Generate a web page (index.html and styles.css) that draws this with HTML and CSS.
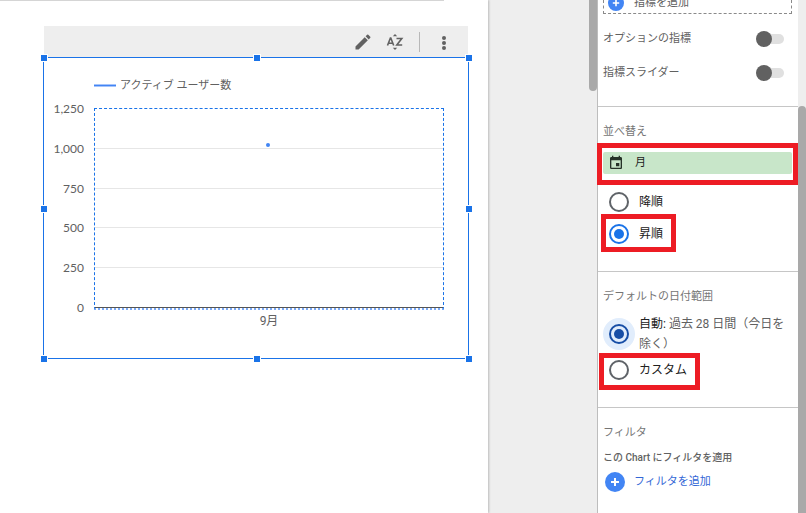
FILE: index.html
```html
<!DOCTYPE html>
<html lang="ja">
<head>
<meta charset="utf-8">
<title>レポート エディタ</title>
<link rel="stylesheet" href="styles.css">
</head>
<body>
<div class="app">
  <main class="canvas">
    <div class="page">
      <div class="rule"></div>
      <div class="toolbar">
        <button class="tool" aria-label="編集"><svg width="20" height="20" viewBox="0 0 24 24"><path d="M3 17.25V21h3.75L17.81 9.94l-3.75-3.75L3 17.25zM20.71 7.04a1 1 0 0 0 0-1.41l-2.34-2.34a1 1 0 0 0-1.41 0l-1.83 1.83 3.75 3.75 1.83-1.83z"/></svg></button>
        <button class="tool" aria-label="並べ替え"><svg width="20" height="20" viewBox="0 0 20 20"><path d="M10 2l2.200 2.200h-4.400zM10 18l-2.200-2.200h4.400z"/><path class="stroke" d="M2.500 13.500L5.400 6h.4l2.900 7.500M3.500 11.300h4.300M11.500 6.500h5.300l-5 6.500h5.400"/></svg></button>
        <span class="separator"></span>
        <button class="tool" aria-label="その他"><svg width="20" height="20" viewBox="0 0 20 20"><circle cx="10" cy="6" r="2"/><circle cx="10" cy="11" r="2"/><circle cx="10" cy="16" r="2"/></svg></button>
      </div>
      <section class="chart">
        <div class="legend"><span class="swatch"></span><span class="series">アクティブ ユーザー数</span></div>
        <div class="graph">
          <div class="scale"><span>1,250</span><span>1,000</span><span>750</span><span>500</span><span>250</span><span>0</span></div>
          <div class="plot">
            <div class="band"></div><div class="band"></div><div class="band"></div><div class="band"></div><div class="band"></div>
            <span class="point"></span>
          </div>
        </div>
        <div class="months">9月</div>
        <div class="handles">
          <i class="handle top start"></i><i class="handle top middle"></i><i class="handle top end"></i>
          <i class="handle center start"></i><i class="handle center end"></i>
          <i class="handle bottom start"></i><i class="handle bottom middle"></i><i class="handle bottom end"></i>
        </div>
      </section>
    </div>
  </main>
  <div class="scroll scroll-canvas"><div class="thumb"></div></div>
  <aside class="panel">
    <section class="section metrics">
      <div class="dropzone">
        <button class="add"><svg width="16" height="16" viewBox="0 0 20 20"><circle cx="10" cy="10" r="10"/><path d="M10 6v8M6 10h8"/></svg>指標を追加</button>
      </div>
      <label class="option">オプションの指標<input class="switch" type="checkbox"></label>
      <label class="option">指標スライダー<input class="switch" type="checkbox"></label>
    </section>
    <section class="section sort">
      <h2>並べ替え</h2>
      <div class="marked marked-field">
        <button class="field"><svg width="16" height="16" viewBox="0 0 24 24"><path d="M17 12h-5v5h5v-5zM16 1v2H8V1H6v2H5c-1.100 0-2 .9-2 2v14a2 2 0 0 0 2 2h14c1.100 0 2-.9 2-2V5c0-1.100-.9-2-2-2h-1V1h-2zm3 18H5V8h14v11z"/></svg>月</button>
      </div>
      <label class="choice"><input type="radio" name="order">降順</label>
      <label class="choice marked marked-order"><input type="radio" name="order" checked>昇順</label>
    </section>
    <section class="section dates">
      <h2>デフォルトの日付範囲</h2>
      <label class="choice auto"><input class="focused" type="radio" name="range" checked><span>自動: <span class="hint">過去 28 日間（今日を除く）</span></span></label>
      <label class="choice marked marked-custom"><input type="radio" name="range">カスタム</label>
    </section>
    <section class="section filters">
      <h2>フィルタ</h2>
      <h3>この Chart にフィルタを適用</h3>
      <button class="add add-filter"><svg width="20" height="20" viewBox="0 0 20 20"><circle cx="10" cy="10" r="10"/><path d="M10 6v8M6 10h8"/></svg>フィルタを追加</button>
    </section>
  </aside>
  <div class="scroll scroll-panel"><div class="thumb"></div></div>
</div>
</body>
</html>
```
FILE: styles.css
```css
* {
  box-sizing: border-box;
}

body {
  margin: 0;
  background: #eee;
  color: #616161;
  font: 11px/16px Roboto, "Noto Sans CJK JP", sans-serif;
}

button {
  display: flex;
  align-items: center;
  margin: 0;
  padding: 0;
  border: 0;
  background: none;
  color: inherit;
  font: inherit;
}

svg {
  flex: none;
}

.app {
  display: flex;
  height: 100vh;
  overflow: hidden;
}

/* Report canvas */
.canvas {
  display: flex;
  flex: 1;
  padding-right: 101px;
}

.page {
  flex: 1;
  padding: 0 19px 0 43px;
  background: #fff;
  box-shadow: 1px 0 2px #bbb;
}

.rule {
  height: 1px;
  margin: 0 25px 0 -43px;
  background: #d5d5d5;
}

.toolbar {
  display: flex;
  align-items: center;
  justify-content: flex-end;
  height: 31px;
  margin: 25px 1px 0;
  padding-right: 14px;
  background: #eee;
}

.tool {
  margin-right: 12px;
}

.tool:last-child {
  margin: 0;
}

.tool svg {
  fill: #616161;
}

.tool .stroke {
  fill: none;
  stroke: #616161;
  stroke-width: 1.6;
}

.separator {
  width: 1px;
  height: 20px;
  margin: 0 14px 0 2px;
  background: #b8b8b8;
}

.chart {
  position: relative;
  padding: 17px 24px 29px 0;
  border: 1px solid #1a73e8;
}

.legend {
  display: flex;
  align-items: center;
  gap: 4px;
  height: 20px;
  margin: 0 0 13px 50px;
}

.series {
  padding-top: 2px;
}

.swatch {
  width: 22px;
  height: 3px;
  border: solid #a5c4fb;
  border-width: 1px 0;
  background: #4285f4;
}

.graph {
  display: flex;
}

.scale {
  display: flex;
  flex-direction: column;
  justify-content: space-between;
  width: 50px;
  margin: -7px 0 -6px;
  padding-right: 10px;
  font-family: Lato, sans-serif;
  font-size: 12px;
  text-align: right;
}

.plot {
  position: relative;
  display: flex;
  flex: 1;
  flex-direction: column;
  height: 202px;
  border: 1px dashed #1a73e8;
  border-bottom: 2px dotted #7baaf7;
}

.band {
  flex: 1;
  border-bottom: 1px solid #e6e6e6;
}

.band:nth-child(5) {
  border-color: #555;
}

.point {
  position: absolute;
  top: 17%;
  left: 49%;
  width: 4px;
  height: 4px;
  border-radius: 50%;
  background: #4285f4;
}

.months {
  margin: 3px 0 0 50px;
  font-size: 12px;
  text-align: center;
}

.handles {
  position: absolute;
  inset: 0 -1px -1px 0;
}

.handle {
  position: absolute;
  width: 6px;
  height: 6px;
  margin: -3px;
  background: #1a73e8;
  box-shadow: 0 0 0 1px #fff;
}

.top { top: 0; }
.center { top: 50%; }
.bottom { top: 100%; }
.start { left: 0; }
.middle { left: 50%; }
.end { left: 100%; }

/* Scroll bars */
.scroll {
  flex: 0 0 8px;
}

.thumb {
  background: #a9a9a9;
}

.scroll-canvas .thumb {
  height: 91px;
  border-radius: 0 0 4px 4px;
}

.scroll-panel {
  padding-top: 106px;
}

.scroll-panel .thumb {
  height: 100%;
  border-radius: 4px 4px 0 0;
}

/* Properties panel */
.panel {
  flex: 0 0 201px;
  border-left: 1px solid #bdbdbd;
  background: #fff;
}

.section {
  padding: 17px 6px 0 5px;
  border-bottom: 1px solid #c6c6c6;
}

.section:last-child {
  border: 0;
}

.metrics {
  padding-top: 0;
  padding-bottom: 25px;
}

.dropzone {
  display: flex;
  align-items: flex-end;
  height: 14px;
  margin-bottom: 17px;
  padding: 0 4px 2px;
  border: 1px dashed #8a8a8a;
  border-top: 0;
}

.add {
  gap: 10px;
}

.add circle {
  fill: #4285f4;
}

.add path {
  stroke: #fff;
  stroke-width: 2;
}

.option {
  display: flex;
  align-items: center;
  justify-content: space-between;
  height: 16px;
  margin: 0 8px 18px 0;
}

.option:last-child {
  margin-bottom: 0;
}

.switch {
  position: relative;
  width: 20px;
  height: 10px;
  margin: 0;
  border-radius: 0 5px 5px 0;
  background: #e0e0e0;
  appearance: none;
}

.switch::before {
  position: absolute;
  top: -3px;
  left: -8px;
  width: 16px;
  height: 16px;
  border-radius: 50%;
  background: #616161;
  content: "";
}

h2 {
  margin: 0;
  color: #757575;
  font-size: 11px;
  font-weight: 400;
}

h3 {
  margin: 0;
  font-size: 10px;
  font-weight: 500;
}

.sort {
  padding-bottom: 26px;
}

.marked {
  position: relative;
}

.marked::after {
  position: absolute;
  border: 5px solid #ed1c24;
  content: "";
  pointer-events: none;
}

.marked-field {
  margin: 12px 0 17px;
}

.marked-field::after {
  inset: -9px -6px -11px;
}

.field {
  gap: 11px;
  width: 100%;
  height: 22px;
  padding: 0 5px;
  border-radius: 2px;
  background: #c8e6c9;
  color: #212121;
}

.field svg {
  fill: #263228;
}

.choice {
  display: flex;
  align-items: center;
  gap: 10px;
  width: fit-content;
  height: 22px;
  margin-bottom: 10px;
  padding-left: 6px;
  color: #212121;
  font-size: 12px;
  line-height: 20px;
}

.choice:last-child {
  margin-bottom: 0;
}

.choice input {
  display: grid;
  flex: none;
  place-items: center;
  width: 20px;
  height: 20px;
  margin: 0;
  border: 2px solid #5f6368;
  border-radius: 50%;
  color: #1a73e8;
  appearance: none;
}

.choice input:checked {
  border-color: currentColor;
}

.choice input:checked::before {
  width: 10px;
  height: 10px;
  border-radius: 50%;
  background: currentColor;
  content: "";
}

.choice input.focused {
  background: #e1edfc;
  box-shadow: 0 0 0 6px #e1edfc;
  color: #174ea6;
}

.marked-order::after {
  inset: -9px -13px -7px -2px;
}

.dates {
  padding-bottom: 26px;
}

.choice.auto {
  height: 40px;
  margin: 9px -4px 5px 0;
  width: auto;
}

.hint {
  color: #616161;
}

.marked-custom::after {
  inset: -6px -13px -9px -4px;
}

.filters h3 {
  margin: 9px 0 6px;
}

.add-filter {
  gap: 9px;
  margin-left: 2px;
  color: #3367d6;
}
```
